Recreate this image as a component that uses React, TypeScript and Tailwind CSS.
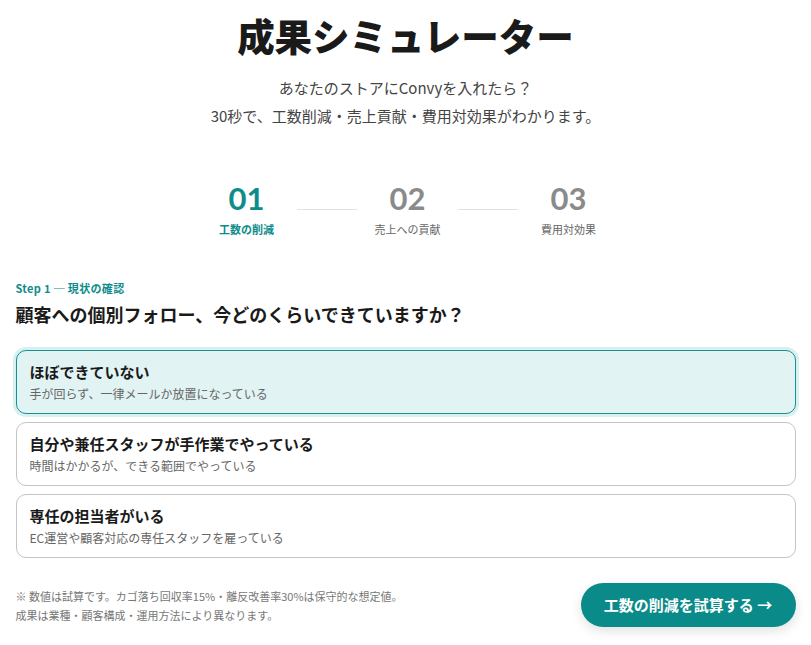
import { useState } from 'react'

const options = [
  { title: 'ほぼできていない', desc: '手が回らず、一律メールか放置になっている' },
  { title: '自分や兼任スタッフが手作業でやっている', desc: '時間はかかるが、できる範囲でやっている' },
  { title: '専任の担当者がいる', desc: 'EC運営や顧客対応の専任スタッフを雇っている' },
]

const steps = [
  { no: '01', label: '工数の削減' },
  { no: '02', label: '売上への貢献' },
  { no: '03', label: '費用対効果' },
]

export default function App() {
  const [selected, setSelected] = useState(0)

  return (
    <div
      className="min-h-screen bg-white text-[#1a1a1a]"
      style={{ fontFamily: '"Noto Sans CJK JP", "Noto Sans", sans-serif' }}
    >
      <div className="mx-auto w-[780px] pt-[9px]">
        {/* ヘッダー */}
        <h1 className="text-center text-[37.5px] font-black leading-[52px]">成果シミュレーター</h1>
        <p className="mt-[13px] text-center text-[15px] leading-[28px] text-[#444]">
          あなたのストアにConvyを入れたら？
          <br />
          30秒で、工数削減・売上貢献・費用対効果がわかります。
        </p>

        {/* ステップ */}
        <div className="mt-[48px] flex items-start justify-center pl-[4px]">
          {steps.map((s, i) => (
            <div key={s.no} className="flex items-start">
              {i > 0 && <div className="mx-[5px] mt-[31px] h-px w-[60px] bg-[#e2e2e2]" />}
              <div className="flex w-[91px] flex-col items-center">
                <div
                  className={`text-[31px] font-bold leading-[40px] ${i === 0 ? 'text-[#0e8c8c]' : 'text-[#8a8a8a]'}`}
                  style={{ fontFamily: 'Lato, "Noto Sans", sans-serif' }}
                >
                  {s.no}
                </div>
                <div
                  className={`mt-[3px] text-[11px] leading-[16px] ${i === 0 ? 'font-bold text-[#0e8c8c]' : 'text-[#666]'}`}
                >
                  {s.label}
                </div>
              </div>
            </div>
          ))}
        </div>

        {/* 質問 */}
        <div className="mt-[43px] text-[11px] font-bold leading-[16px] tracking-[0.03em] text-[#0e8c8c]">
          Step 1 ─ 現状の確認
        </div>
        <h2 className="mt-[5px] text-[18px] font-bold leading-[26px]">顧客への個別フォロー、今どのくらいできていますか？</h2>

        <div className="mt-[23px] flex flex-col gap-[8px]">
          {options.map((o, i) => (
            <button
              key={o.title}
              onClick={() => setSelected(i)}
              className={`flex h-[64px] flex-col justify-center rounded-[10px] border px-[13px] text-left ${
                selected === i
                  ? 'border-[#1a9090] bg-[#e1f3f3] shadow-[0_0_0_3px_#d7f1f1]'
                  : 'border-[#c4c4c4] bg-white'
              }`}
            >
              <div className="text-[15px] font-bold leading-[22px] text-[#1a1a1a]">{o.title}</div>
              <div className="mt-[2px] text-[12px] leading-[18px] text-[#666]">{o.desc}</div>
            </button>
          ))}
        </div>

        {/* フッター */}
        <div className="mt-[25px] flex items-center justify-between">
          <p className="pt-[2px] text-[11px] leading-[19px] text-[#777]">
            ※ 数値は試算です。カゴ落ち回収率15%・離反改善率30%は保守的な想定値。
            <br />
            成果は業種・顧客構成・運用方法により異なります。
          </p>
          <button className="h-[44px] w-[215px] rounded-full bg-[#0b8a8a] text-[15px] font-bold text-white shadow-[0_4px_12px_rgba(0,0,0,0.12)]">
            工数の削減を試算する →
          </button>
        </div>
      </div>
    </div>
  )
}
